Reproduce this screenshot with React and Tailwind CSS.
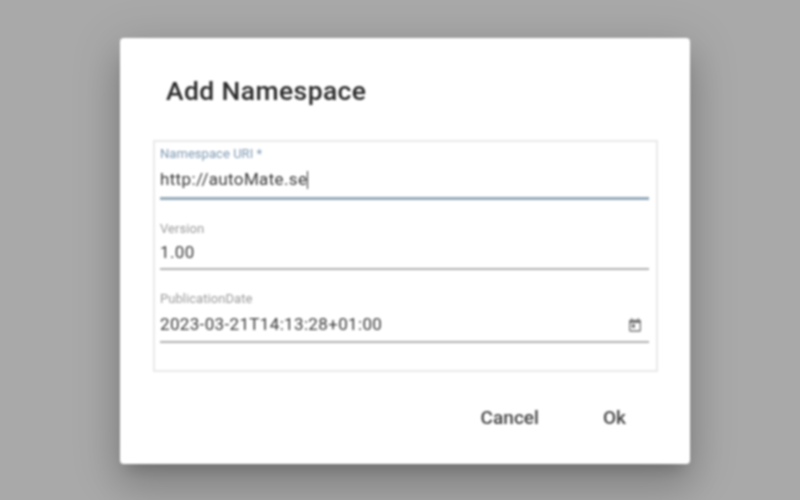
import React from "react";

const Field = ({ label, value, labelClass, lineClass, boxClass, caret, icon }) => (
  <div className="flex flex-col">
    <label className={`text-[13px] leading-3 tracking-[0.05px] ${labelClass}`}>{label}</label>
    <div className={`flex items-center justify-between mt-[3px] ${boxClass}`}>
      <span className="flex items-center text-[17px] tracking-[0.35px] text-[#3a3a3a]">
        {value}
        {caret && <span className="w-px h-[18px] bg-[#333]"></span>}
      </span>
      {icon}
    </div>
    <div className={lineClass}></div>
  </div>
);

const CalendarIcon = () => (
  <svg width="16" height="16" viewBox="0 0 24 24" fill="#777777" className="mr-[6px]">
    <path d="M19 4h-1V2h-2v2H8V2H6v2H5a2 2 0 0 0-2 2v14a2 2 0 0 0 2 2h14a2 2 0 0 0 2-2V6a2 2 0 0 0-2-2zm0 16H5V9h14v11zM7 11h5v5H7z" />
  </svg>
);

export default function App() {
  return (
    <div className="h-[500px] w-[800px] bg-[#a9a9a9] pt-[38px] pl-[120px] overflow-hidden font-['Roboto',sans-serif]">
      <div className="w-[570px] h-[426px] bg-white rounded-[4px] shadow-[0_11px_15px_-7px_rgba(0,0,0,0.2),0_24px_38px_3px_rgba(0,0,0,0.14),0_9px_46px_8px_rgba(0,0,0,0.12)] blur-[0.8px] flex flex-col">
        <h2 className="pl-[46px] pt-[36px] h-[102px] text-[26.5px] leading-[34px] font-medium tracking-[0.4px] text-[#2b2b2b]">
          Add Namespace
        </h2>
        <div className="ml-[33px] w-[505px] h-[232px] border-2 border-[#e9e9e9] pl-[5px] pr-[7px] pt-[6px] flex flex-col gap-[23px]">
          <Field
            label="Namespace URI *"
            value="http://autoMate.se"
            caret
            labelClass="text-[#7f9ab3]"
            lineClass="h-[3px] bg-[#94aabb]"
            boxClass="h-[34px]"
          />
          <Field
            label="Version"
            value="1.00"
            labelClass="text-[#9a9a9a]"
            lineClass="h-[2px] bg-[#b0b0b0]"
            boxClass="h-[30px]"
          />
          <Field
            label="PublicationDate"
            value="2023-03-21T14:13:28+01:00"
            labelClass="text-[#9a9a9a]"
            lineClass="h-[2px] bg-[#b0b0b0]"
            boxClass="h-[33px]"
            icon={<CalendarIcon />}
          />
        </div>
        <div className="flex justify-end items-center gap-[64px] pr-[64px] mt-[32px]">
          <button className="text-[19px] tracking-[0.05px] font-medium text-[#444]">Cancel</button>
          <button className="text-[19px] font-medium text-[#444]">Ok</button>
        </div>
      </div>
    </div>
  );
}
